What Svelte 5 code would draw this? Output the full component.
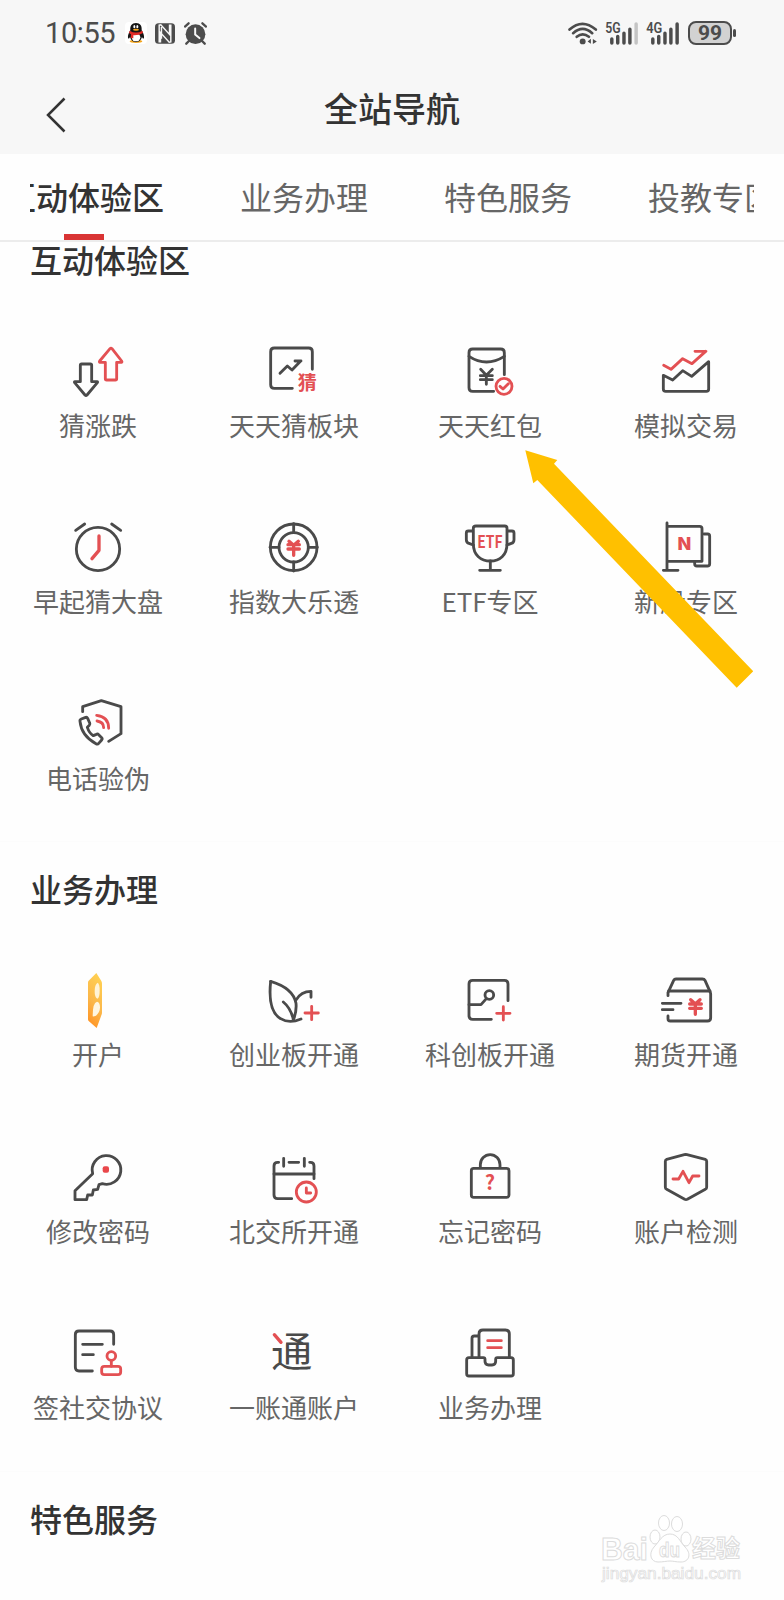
<script lang="ts">
  type Tab = { label: string; active?: boolean };
  type Entry = { icon: string; label: string };
  type Section = { title: string; entries: Entry[] };

  const tabs: Tab[] = [
    { label: '互动体验区', active: true },
    { label: '业务办理' },
    { label: '特色服务' },
    { label: '投教专区' }
  ];

  const sections: Section[] = [
    {
      title: '互动体验区',
      entries: [
        { icon: 'updown', label: '猜涨跌' },
        { icon: 'sector', label: '天天猜板块' },
        { icon: 'packet', label: '天天红包' },
        { icon: 'trade', label: '模拟交易' },
        { icon: 'alarm', label: '早起猜大盘' },
        { icon: 'wheel', label: '指数大乐透' },
        { icon: 'trophy', label: 'ETF专区' },
        { icon: 'flag', label: '新股专区' },
        { icon: 'phone', label: '电话验伪' }
      ]
    },
    {
      title: '业务办理',
      entries: [
        { icon: 'coin', label: '开户' },
        { icon: 'leaf', label: '创业板开通' },
        { icon: 'board', label: '科创板开通' },
        { icon: 'futures', label: '期货开通' },
        { icon: 'key', label: '修改密码' },
        { icon: 'calendar', label: '北交所开通' },
        { icon: 'lock', label: '忘记密码' },
        { icon: 'shield', label: '账户检测' },
        { icon: 'stamp', label: '签社交协议' },
        { icon: 'tong', label: '一账通账户' },
        { icon: 'tray', label: '业务办理' }
      ]
    },
    { title: '特色服务', entries: [] }
  ];
</script>

<!-- All entry icons are drawn on a 180 grid and shown at 60px -->
{#snippet entryIcon(name: string)}
  <svg class="entry-icon" viewBox="0 0 180 180" aria-hidden="true">
    {#if name === 'updown'}
      <path d="M37 73q0-4 4-4h26q4 0 4 4v49h16q3 0 1 3l-31 37q-3 3-6 0l-31-37q-2-3 1-3h16z" />
      <path class="red" d="M112 113q0 4 4 4h26q4 0 4-4V64h14q3-1 1-4l-29-37q-3-3-6 0L95 60q-2 3 1 4h16z" />
    {:else if name === 'sector'}
      <path d="M145 85V32q0-11-11-11H31q-11 0-11 11v99q0 11 11 11h54" />
      <path d="M48 97l22-22 14 12 26-27M93 60h18" />
      <text class="red-text" x="130" y="146" font-size="57">猜</text>
    {:else if name === 'packet'}
      <path d="M133 101V35q0-11-11-11H38q-11 0-11 11v105q0 11 11 11h63" />
      <path d="M27 46q52 34 106 0M62 85l17 18 18-18M79 103v27M61 104h36M61 116h36" />
      <circle class="red" cx="132" cy="136" r="24" />
      <path class="red" d="M120 136l9 8 16-16" />
    {:else if name === 'trade'}
      <path class="red" d="M23 73l22 12 35-32 28 15 41-37M117 31h33" />
      <path d="M22 103l28 14 30-28 27 17 51-44v82q0 7-7 7H29q-7 0-7-7z" />
    {:else if name === 'alarm'}
      <circle cx="90" cy="96" r="65" />
      <path d="M23 40l27-19M131 21l27 19" />
      <path class="red thick" d="M93 57v43l-21 25" />
    {:else if name === 'wheel'}
      <circle cx="89" cy="91" r="70" />
      <circle cx="89" cy="91" r="44" />
      <path d="M89 20v27M89 135v27M18 91h27M133 91h27" />
      <path class="red thick" d="M75 73l14 12 14-12M89 85v30M72 83h34M72 96h34" />
    {:else if name === 'trophy'}
      <path d="M48 27h86q7 0 7 7v46c0 35-22 52-50 52s-51-17-51-52V34q0-7 8-7z" />
      <path d="M38 42H25q-6 0-6 6v20q0 9 8 11l13 5M143 42h13q6 0 6 6v20q0 9-8 11l-13 5" />
      <path d="M91 132v28M59 160h62" />
      <text class="red-text" x="90" y="93" font-size="50" textLength="76" lengthAdjust="spacingAndGlyphs">ETF</text>
    {:else if name === 'flag'}
      <path d="M33 18v142M22 160h44M33 28h98q7 0 7 7v98H33" />
      <path d="M144 51h11q6 0 6 7v82q0 7-7 7h-31q-7 0-7-7v-6" />
      <text class="red-text heavy" x="85" y="99" font-size="49" textLength="46" lengthAdjust="spacingAndGlyphs">N</text>
    {:else if name === 'phone'}
      <path d="M44 53V38l56-18 59 18v81l-37 23" />
      <path d="M36 82q-1-5 4-7l13-5q4-1 6 3l6 14q2 4-1 7l-6 6q6 18 18 25l9-4q4-2 7 1l9 9q3 3 0 7l-9 10q-3 4-8 1C56 134 39 112 36 82z" />
      <path class="red" d="M86 64q36 4 36 39M87 81q20 3 20 20" />
    {:else if name === 'coin'}
      <defs>
        <linearGradient id="gold" x1="0.6" y1="0" x2="0.3" y2="1">
          <stop offset="0" stop-color="#ffd052" />
          <stop offset="0.55" stop-color="#fbb74a" />
          <stop offset="1" stop-color="#ff9324" />
        </linearGradient>
      </defs>
      <path class="fill" fill="url(#gold)" d="M85 9l15 24q2 4 2 8v87q0 4-2 8l-14 38-24-21q-2-2-2-5V38q0-4 2-6z" />
      <path class="fill" fill="#fff3d6" d="M89 38q6 3 6 24t-7 24q-8-3-8-23t9-25z" />
      <path class="fill" fill="#fff6e0" d="M87 95q9 2 9 17t-12 25q-7 3-10 2 0-42 13-44z" />
    {:else if name === 'leaf'}
      <path d="M20 34C14 90 22 130 50 146c16 10 40 10 61 1" />
      <path d="M20 34c40 12 70 32 76 66 2 20-2 35-8 50M58 96q22 18 30 52" />
      <path d="M97 89q14-25 44-25v18" />
      <path class="red" d="M143 109v40M123 129h40" />
    {:else if name === 'board'}
      <path d="M144 92V42q0-11-11-11H38q-11 0-11 11v95q0 11 11 11h56" />
      <path d="M27 104h36l16-18" />
      <circle cx="88" cy="75" r="13" />
      <path class="red" d="M130 110v40M110 130h40" />
    {:else if name === 'futures'}
      <path d="M36 77v-9l17-37q2-4 7-4h79q6 0 8 4l16 36q1 3 1 6v70q0 10-10 10H43q-7 0-7-7v-8" />
      <path d="M38 63h124M19 100h56M19 119h32" />
      <path class="red thick" d="M104 89l14 13 14-13M118 102v31M101 102h35M101 115h35" />
    {:else if name === 'key'}
      <path d="M74 80L21 131v27h35l3-14h14l3-15 13-2 4-14 10-3A43 43 0 1 0 74 80z" />
      <rect class="fill" fill="#e9474b" x="104" y="58" width="19" height="19" rx="6" />
    {:else if name === 'calendar'}
      <path d="M44 46h-3q-11 0-11 11v87q0 11 11 11h42M137 46h2q11 0 11 11v38" />
      <path d="M30 81h120M59 34v24M121 34v24M75 46h29" />
      <circle class="red" cx="127" cy="135" r="30" />
      <path class="red" d="M127 123v15h13" />
    {:else if name === 'lock'}
      <rect x="34" y="64" width="113" height="87" rx="7" />
      <path d="M61 62v-9a29.500 30 0 0 1 59 0v9" />
      <text class="red-text" x="90" y="128" font-size="60">?</text>
    {:else if name === 'shield'}
      <path d="M28 43q0-5 4-6l53-14q4-1 8 0l55 14q4 1 4 6v78q0 4-4 6l-54 30q-4 2-8 0l-54-30q-4-2-4-6z" />
      <path class="red" d="M51 96h17l13-23 18 34 11-20h19" />
    {:else if name === 'stamp'}
      <path d="M137 64V35q0-11-11-11H33q-11 0-11 11v98q0 11 11 11h40M44 64h59M44 95h32" />
      <circle class="red" cx="130" cy="99" r="13" />
      <path class="red" d="M130 112v18" />
      <rect class="red" x="101" y="130" width="57" height="25" rx="8" />
    {:else if name === 'tong'}
      <text class="dark-text" x="83" y="132" font-size="124">通</text>
      <path class="mask" d="M29 34l26 25" />
      <path class="red thick" d="M31 35l20 23" />
    {:else if name === 'tray'}
      <path d="M57 101V33q0-12 12-12h67q12 0 12 12v68M36 101V46q0-7 7-7h12" />
      <path d="M27 104h43q5 0 5 5v6q0 11 11 11h10q11 0 11-11v-6q0-5 5-5h41q7 0 7 7v41q0 7-7 7H27q-7 0-7-7v-41q0-7 7-7z" />
      <path class="red" d="M83 53h41M83 74h41" />
    {/if}
  </svg>
{/snippet}

<div class="screen">
  <header>
    <div class="status-bar">
      <span class="time">10:55</span>
      <svg class="qq" viewBox="0 0 66 66" aria-hidden="true">
        <rect width="66" height="66" rx="12" fill="#fff" />
        <ellipse cx="33" cy="58" rx="19" ry="5" fill="#f5a51b" />
        <path d="M33 3c-13 0-18 9-17 22C11 33 8 41 9 48c2 4 5 0 6-3 3 10 9 15 18 15s15-5 18-15c1 3 4 7 6 3 1-7-2-15-7-23C51 12 46 3 33 3z" fill="#151515" />
        <ellipse cx="33" cy="46" rx="13" ry="12" fill="#fff" />
        <ellipse cx="28" cy="14" rx="3" ry="5" fill="#fff" />
        <ellipse cx="37" cy="14" rx="3" ry="5" fill="#fff" />
        <ellipse cx="33" cy="23" rx="9" ry="3" fill="#f5a51b" />
        <path d="M14 26q19 11 38 0l2 7q-12 8-29 7v9l-8-1 1-11-6-4z" fill="#e12a26" />
      </svg>
      <svg class="nfc" viewBox="0 0 62 64" aria-hidden="true">
        <rect width="62" height="64" rx="11" fill="#4c4c4c" />
        <path d="M13 60V6l5-1 27 30V4M49 4v54l-5 1-27-30v31M20 12v36" fill="none" stroke="#f7f7f7" stroke-width="4.500" />
      </svg>
      <svg class="clock" viewBox="0 0 70 68" aria-hidden="true">
        <circle cx="35" cy="36" r="30" fill="#4c4c4c" />
        <path d="M3 13L14 3M56 3l11 10M15 57l-8 8M55 57l8 8" fill="none" stroke="#4c4c4c" stroke-width="7" stroke-linecap="round" />
        <path d="M34 19v18l13 11" fill="none" stroke="#f7f7f7" stroke-width="6" stroke-linecap="round" />
      </svg>

      <svg class="wifi" viewBox="0 0 90 70" aria-hidden="true">
        <path d="M4 23q39-35 80 0M15 34q29-26 58 0M26 45q18-15 37 0" fill="none" stroke="#4c4c4c" stroke-width="8" stroke-linecap="round" />
        <circle cx="44" cy="59" r="9" fill="#4c4c4c" />
        <path d="M69 51v15l-10-7zM75 52v15l12-8z" fill="#4c4c4c" />
      </svg>
      <svg class="signal" viewBox="0 0 102 70" aria-hidden="true">
        <text x="0" y="34" font-size="43" textLength="47" lengthAdjust="spacingAndGlyphs">5G</text>
        <path d="M20 52v12M38 44v20M57 34v30M75 22v42" fill="none" stroke="#4c4c4c" stroke-width="10.500" stroke-linecap="round" />
        <path d="M94 6v58" fill="none" stroke="#c4c4c4" stroke-width="10.500" stroke-linecap="round" />
      </svg>
      <svg class="signal" viewBox="0 0 102 70" aria-hidden="true">
        <text x="0" y="34" font-size="43" textLength="49" lengthAdjust="spacingAndGlyphs">4G</text>
        <path d="M20 52v12M38 44v20M57 34v30M75 22v42M94 6v58" fill="none" stroke="#4c4c4c" stroke-width="10.500" stroke-linecap="round" />
      </svg>
      <span class="battery">99</span>
    </div>

    <div class="title-bar">
      <svg class="back" viewBox="0 0 20 36" aria-hidden="true">
        <path d="M18.500 1.500L2 18l16.500 16.500" fill="none" stroke="#333" stroke-width="2.500" />
      </svg>
      <h1>全站导航</h1>
    </div>
  </header>

  <nav>
    <div class="tab-window">
      <div class="tab-strip">
        {#each tabs as tab (tab.label)}
          <span class="tab" class:active={tab.active}>{tab.label}</span>
        {/each}
      </div>
    </div>
  </nav>

  <main>
    {#each sections as section (section.title)}
      <section>
        <h2>{section.title}</h2>
        <div class="entries">
          {#each section.entries as entry (entry.label)}
            <div class="entry">
              {@render entryIcon(entry.icon)}
              <span class="entry-label">{entry.label}</span>
            </div>
          {/each}
        </div>
      </section>
    {/each}
  </main>

  <svg class="pointer" viewBox="0 0 228 238" aria-hidden="true">
    <path d="M.3.300l32 9.700-3.300 3.700 199.300 207.600-16.600 16.400L12.300 30l-4 3.300z" fill="#ffc000" />
  </svg>

  <svg class="watermark" viewBox="0 0 144 72" aria-hidden="true">
    <text x="1" y="46" font-size="32" textLength="47" lengthAdjust="spacingAndGlyphs">Bai</text>
    <ellipse cx="55" cy="23" rx="5" ry="7" />
    <ellipse cx="64" cy="9" rx="5.500" ry="7.500" />
    <ellipse cx="77" cy="10" rx="5.500" ry="7.500" />
    <ellipse cx="86" cy="25" rx="5" ry="7" />
    <path d="M70 20c8 0 10 8 15 13 7 7 4 15-4 15-5 0-8-1-11-1s-7 1-12 1c-7 0-10-8-4-15 5-5 8-13 16-13z" />
    <text x="59" y="43" font-size="21" textLength="21" lengthAdjust="spacingAndGlyphs">du</text>
    <text x="92" y="43" font-size="24" textLength="48" lengthAdjust="spacingAndGlyphs">经验</text>
    <text class="url" x="2" y="65" font-size="16" textLength="139" lengthAdjust="spacingAndGlyphs">jingyan.baidu.com</text>
  </svg>
</div>

<style>
  :global(body) {
    margin: 0;
    background: #fefefe;
  }
  .screen {
    position: relative;
    display: flex;
    flex-direction: column;
    width: 784px;
    height: 1600px;
    overflow: hidden;
    background: #fefefe;
    color: #333;
    font-family: 'Noto Sans CJK SC', 'Noto Sans', sans-serif;
  }
  header {
    flex: none;
    height: 154px;
    background: #f7f7f7;
  }

  .status-bar {
    display: flex;
    align-items: center;
    height: 66px;
    padding: 0 52px 0 45px;
    box-sizing: border-box;
  }
  .time {
    width: 80px;
    color: #4c4c4c;
    font-family: Roboto, sans-serif;
    font-size: 29px;
    letter-spacing: -0.4px;
    line-height: 68px;
  }
  .qq { width: 22px; height: 22px; }
  .nfc { width: 20px; height: 21px; margin-left: 8px; }
  .clock { width: 23px; height: 23px; margin-left: 9px; }
  .wifi { width: 30px; height: 23px; margin-left: auto; }
  .signal {
    width: 34px;
    height: 23px;
    margin-left: 7px;
    overflow: visible;
  }
  .signal text {
    fill: #4c4c4c;
    font-family: Roboto, sans-serif;
    font-weight: 600;
  }
  .battery {
    position: relative;
    width: 40px;
    height: 20px;
    margin-left: 8px;
    border: 2px solid #4c4c4c;
    border-radius: 8px;
    background: #d2d2d2;
    color: #4c4c4c;
    font-family: Roboto, sans-serif;
    font-size: 21px;
    font-weight: 700;
    line-height: 21px;
    text-align: center;
  }
  .battery::after {
    content: '';
    position: absolute;
    top: 6px;
    right: -6px;
    width: 3px;
    height: 8px;
    border-radius: 2px;
    background: #4c4c4c;
  }

  .title-bar {
    display: grid;
    grid-template-columns: 1fr auto 1fr;
    align-items: start;
    height: 88px;
  }
  .back {
    width: 20px;
    height: 36px;
    margin: 31px 0 0 46px;
  }
  h1 {
    margin: 0;
    font-size: 34px;
    font-weight: 500;
    line-height: 84px;
  }

  nav {
    flex: none;
    height: 86px;
    padding: 0 30px;
    border-bottom: 2px solid #ececec;
  }
  .tab-window { overflow: hidden; }
  /* strip is scrolled so that the first tab is partly out of view */
  .tab-strip {
    display: flex;
    width: max-content;
    margin-left: -64px;
  }
  .tab {
    display: flex;
    flex-direction: column;
    align-items: center;
    height: 86px;
    padding: 0 38px;
    color: #666;
    font-size: 32px;
    line-height: 85px;
    white-space: nowrap;
  }
  .tab.active {
    color: #333;
    font-weight: 500;
  }
  .tab.active::after {
    content: '';
    width: 40px;
    height: 6px;
    margin-top: -5px;
    flex: none;
    background: #d93434;
  }

  main {
    flex: 1;
    min-height: 0;
    overflow: hidden;
  }
  section {
    height: 628.3px;
    border-top: 1px solid #fcfcfc;
  }
  section:first-child { margin-top: -30px; }
  h2 {
    margin: 0;
    padding: 28px 0 0 30px;
    font-size: 32px;
    font-weight: 500;
    line-height: 36px;
  }
  .entries {
    display: grid;
    grid-template-columns: repeat(4, 196px);
    grid-auto-rows: 102px;
    row-gap: 74.300px;
    margin-top: 64px;
  }
  .entry {
    display: flex;
    flex-direction: column;
    align-items: center;
  }
  .entry-label {
    margin-top: 6px;
    color: #666;
    font-size: 26px;
    line-height: 35px;
    white-space: nowrap;
  }

  .entry-icon {
    width: 60px;
    height: 60px;
    fill: none;
    stroke: #4a4a4a;
    stroke-width: 8.500;
    stroke-linecap: round;
    stroke-linejoin: round;
  }
  .entry-icon .red { stroke: #e35053; }
  .entry-icon .thick { stroke-width: 10; }
  .entry-icon .fill { stroke: none; }
  .entry-icon .mask { stroke: #fefefe; stroke-width: 20; }
  .entry-icon text {
    stroke: none;
    font-weight: 700;
    text-anchor: middle;
  }
  .entry-icon .red-text { fill: #e35053; }
  .entry-icon .heavy { font-weight: 900; }
  .entry-icon .dark-text { fill: #4a4a4a; font-weight: 400; }

  .pointer {
    position: absolute;
    top: 450px;
    left: 525px;
    width: 228px;
    height: 238px;
  }
  .watermark {
    position: absolute;
    top: 1514px;
    left: 600px;
    width: 144px;
    height: 72px;
    fill: #fff;
    stroke: #dcdcdc;
    stroke-width: 1;
    font-family: 'Liberation Sans', 'Noto Sans CJK SC', sans-serif;
    font-weight: 700;
  }
  .watermark .url {
    stroke-width: 0.7;
    font-weight: 400;
  }
</style>
